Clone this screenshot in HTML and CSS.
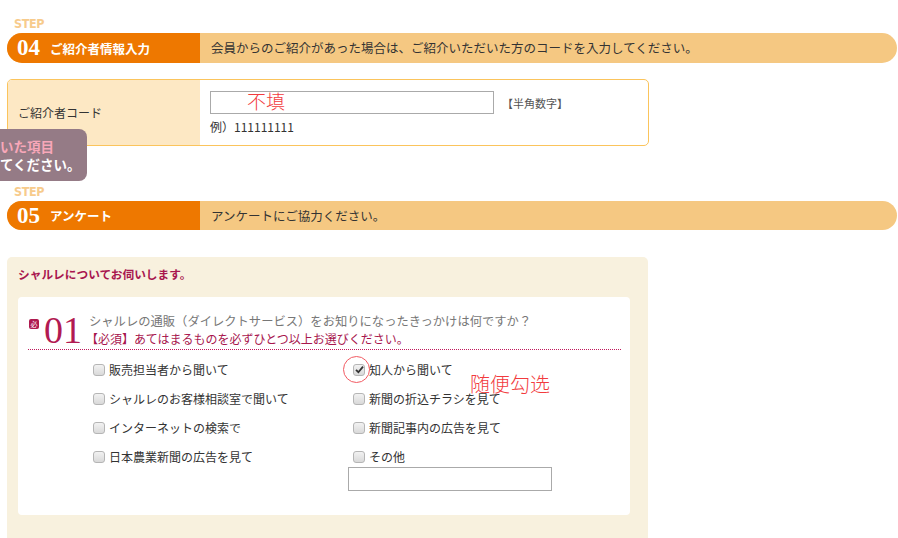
FILE: index.html
```html
<!DOCTYPE html>
<html lang="ja">
<head>
    <meta charset="UTF-8">
    <meta name="viewport" content="width=device-width, initial-scale=1.0">
    <title>会員登録</title>
    <link rel="stylesheet" href="styles.css">
</head>
<body>
    <div class="page">
        <div class="step">
            <p class="step-label">STEP</p>
            <div class="step-bar">
                <div class="step-title"><span class="step-num">04</span>ご紹介者情報入力</div>
                <p class="step-desc">会員からのご紹介があった場合は、ご紹介いただいた方のコードを入力してください。</p>
            </div>
        </div>

        <div class="code-row">
            <div class="code-label">ご紹介者コード</div>
            <div class="code-field">
                <div class="code-line">
                    <input type="text" class="code-input">
                    <span class="code-hint">【半角数字】</span>
                    <span class="note note-input">不填</span>
                </div>
                <p class="code-example">例）111111111</p>
            </div>
        </div>

        <div class="tooltip">
            <p class="tooltip-em">いた項目</p>
            <p>てください。</p>
        </div>

        <div class="step step-next">
            <p class="step-label">STEP</p>
            <div class="step-bar">
                <div class="step-title"><span class="step-num">05</span>アンケート</div>
                <p class="step-desc">アンケートにご協力ください。</p>
            </div>
        </div>

        <div class="survey">
            <p class="survey-title">シャルレについてお伺いします。</p>
            <div class="question">
                <div class="question-head">
                    <span class="badge">必</span>
                    <span class="question-num">01</span>
                    <div class="question-text">
                        <p>シャルレの通販（ダイレクトサービス）をお知りになったきっかけは何ですか？</p>
                        <p class="required">【必須】あてはまるものを必ずひとつ以上お選びください。</p>
                    </div>
                </div>
                <div class="options">
                    <label class="option"><span class="box"></span>販売担当者から聞いて</label>
                    <label class="option option-picked"><span class="box checked"><svg width="9" height="9" viewBox="0 0 9 9"><path d="M1 4.8 L3.4 7.2 L8 1.6" fill="none" stroke="#333" stroke-width="1.8"/></svg></span>知人から聞いて<span class="note-circle"></span></label>
                    <label class="option"><span class="box"></span>シャルレのお客様相談室で聞いて</label>
                    <label class="option"><span class="box"></span>新聞の折込チラシを見て</label>
                    <label class="option"><span class="box"></span>インターネットの検索で</label>
                    <label class="option"><span class="box"></span>新聞記事内の広告を見て</label>
                    <label class="option"><span class="box"></span>日本農業新聞の広告を見て</label>
                    <div class="option-other">
                        <label class="option"><span class="box"></span>その他</label>
                        <input type="text" class="other-input">
                    </div>
                </div>
                <span class="note note-pick">随便勾选</span>
            </div>
            <div class="question question-more"></div>
        </div>
    </div>
</body>
</html>
```

FILE: styles.css
```css
* {
    margin: 0;
    padding: 0;
    box-sizing: border-box;
}

body {
    font-family: "Noto Sans CJK JP", sans-serif;
    color: #333;
    background: #fff;
    overflow: hidden;
}

.page {
    position: relative;
    width: 898px;
    padding: 17px 1px 0 7px;
}

.step-label {
    font-family: "DejaVu Sans Condensed", "DejaVu Sans", sans-serif;
    font-weight: bold;
    font-size: 12.5px;
    line-height: 13px;
    letter-spacing: -0.4px;
    color: #f7cb8c;
    margin: 0 0 3px 7px;
}

.step-bar {
    display: flex;
    height: 30px;
    border-radius: 15px;
    background: #f5c882;
    overflow: hidden;
}

.step-title {
    width: 193px;
    flex-shrink: 0;
    display: flex;
    align-items: center;
    padding-left: 10px;
    background: #ee7800;
    color: #fff;
    font-weight: bold;
    font-size: 12.5px;
}

.step-num {
    font-family: "Liberation Serif", serif;
    font-size: 23px;
    font-weight: bold;
    margin-right: 10px;
    line-height: 30px;
}

.step-desc {
    padding-left: 11px;
    line-height: 30px;
    font-size: 12.5px;
    color: #333;
}

.code-row {
    display: flex;
    width: 642px;
    height: 67px;
    margin-top: 16px;
    border: 1px solid #fbc45c;
    border-radius: 5px;
    overflow: hidden;
}

.code-label {
    width: 192px;
    flex-shrink: 0;
    display: flex;
    align-items: center;
    padding-left: 10px;
    background: #fde8c4;
    font-size: 12px;
}

.code-field {
    padding: 11px 0 0 10px;
}

.code-line {
    position: relative;
    display: flex;
    align-items: center;
}

.code-input {
    width: 284px;
    height: 23px;
    border: 1px solid #aaa;
    outline: none;
}

.code-hint {
    margin-left: 8px;
    font-size: 11px;
    font-weight: normal;
    color: #555;
}

.code-example {
    margin-top: 5px;
    font-size: 12px;
    line-height: 16px;
}

.note {
    position: absolute;
    color: #f23b3e;
    font-family: "Noto Sans CJK SC", sans-serif;
    font-weight: 300;
    white-space: nowrap;
}

.note-input {
    left: 37px;
    top: -2px;
    font-size: 19px;
    line-height: 24px;
}

.tooltip {
    position: absolute;
    left: 0;
    top: 129px;
    width: 87px;
    height: 52px;
    padding-top: 8px;
    background: #957b86;
    border-radius: 0 8px 8px 0;
    color: #fff;
    font-weight: bold;
    font-size: 13.5px;
    line-height: 18px;
    white-space: nowrap;
    overflow: hidden;
}

.tooltip-em {
    color: #f8a7b9;
}

.step-next {
    margin-top: 39px;
}

.step-next .step-bar {
    height: 29px;
}

.survey {
    width: 641px;
    margin-top: 27px;
    padding: 9px 18px 0 11px;
    background: #f8f1de;
    border-radius: 5px 5px 0 0;
    height: 300px;
}

.survey-title {
    font-size: 11.7px;
    font-weight: bold;
    color: #a8164e;
    line-height: 16px;
    margin-bottom: 15px;
}

.question {
    position: relative;
    background: #fff;
    border-radius: 4px;
    padding: 16px 9px 24px 10px;
}

.question-more {
    margin-top: 23px;
    height: 60px;
}

.question-head {
    display: flex;
    align-items: flex-start;
    padding-bottom: 2px;
    border-bottom: 1px dotted #c01a5c;
}

.badge {
    width: 10px;
    height: 10px;
    margin: 6px 5px 0 1px;
    background: #ae1a4f;
    border-radius: 2px;
    color: #fff;
    font-size: 7px;
    line-height: 10px;
    text-align: center;
}

.question-num {
    font-family: "Liberation Serif", serif;
    font-size: 38px;
    line-height: 34px;
    color: #b21a52;
    margin-right: 7px;
}

.question-text {
    font-size: 12.3px;
    line-height: 17px;
    color: #777;
}

.question-text .required {
    font-size: 12px;
    color: #a8164e;
    margin-left: -3px;
}

.options {
    display: grid;
    grid-template-columns: 260px 260px;
    margin: 5px 0 0 65px;
}

.option {
    position: relative;
    display: flex;
    align-items: center;
    height: 29px;
    font-size: 12px;
}

.box {
    display: flex;
    align-items: center;
    justify-content: center;
    width: 12px;
    height: 12px;
    margin-right: 4px;
    border: 1px solid #b5b5b5;
    border-radius: 3px;
    background: linear-gradient(#f2f2f2, #d9d9d9);
}

.note-circle {
    position: absolute;
    left: -10px;
    top: 1px;
    width: 27px;
    height: 27px;
    border: 1px solid #f25a62;
    border-radius: 50%;
}

.other-input {
    display: block;
    width: 204px;
    height: 24px;
    margin: -4px 0 0 -5px;
    border: 1px solid #aaa;
    outline: none;
}

.note-pick {
    left: 452px;
    top: 75px;
    font-size: 20px;
    line-height: 24px;
}
```
